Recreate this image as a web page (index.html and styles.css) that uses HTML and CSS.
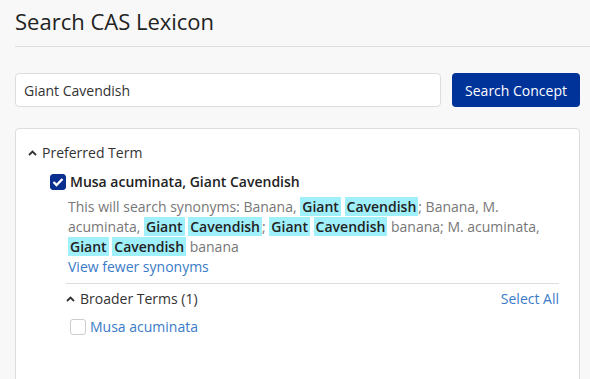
FILE: index.html
```html
<!DOCTYPE html>
<html lang="en">
<head>
    <meta charset="UTF-8">
    <meta name="viewport" content="width=device-width, initial-scale=1.0">
    <title>Search CAS Lexicon</title>
    <link rel="stylesheet" href="styles.css">
</head>
<body>
    <div class="header">
        <h1>Search CAS Lexicon</h1>
    </div>

    <div class="search-row">
        <input type="text" class="search-input" value="Giant Cavendish">
        <button class="button button-primary">Search Concept</button>
    </div>

    <div class="card">
        <div class="section-title">
            <svg class="chevron" width="9" height="6" viewBox="0 0 9 6"><path d="M1 5 L4.5 1.5 L8 5" fill="none" stroke="#333" stroke-width="1.8"/></svg>
            <span>Preferred Term</span>
        </div>

        <div class="term">
            <span class="checkbox checked">
                <svg width="12" height="10" viewBox="0 0 12 10"><path d="M1.5 5 L4.5 8 L10.5 2" fill="none" stroke="#fff" stroke-width="2.4"/></svg>
            </span>
            <span class="term-name">Musa acuminata, Giant Cavendish</span>
        </div>

        <div class="synonyms">
            <p>This will search synonyms: Banana, <mark>Giant</mark> <mark>Cavendish</mark>; Banana, M. acuminata, <mark>Giant</mark> <mark>Cavendish</mark>; <mark>Giant</mark> <mark>Cavendish</mark> banana; M. acuminata, <mark>Giant</mark> <mark>Cavendish</mark> banana</p>
            <a href="#" class="link">View fewer synonyms</a>
        </div>

        <div class="broader">
            <div class="broader-head">
                <div class="section-title">
                    <svg class="chevron" width="9" height="6" viewBox="0 0 9 6"><path d="M1 5 L4.5 1.5 L8 5" fill="none" stroke="#333" stroke-width="1.8"/></svg>
                    <span>Broader Terms (1)</span>
                </div>
                <a href="#" class="link">Select All</a>
            </div>
            <div class="term broader-term">
                <span class="checkbox"></span>
                <a href="#" class="link">Musa acuminata</a>
            </div>
        </div>
    </div>
</body>
</html>
```

FILE: styles.css
```css
body {
    font-family: "Open Sans", Arial, sans-serif;
    font-size: 14px;
    color: #333;
    background-color: #f8f8f8;
    margin: 0;
    padding: 0 10px 0 15px;
}

.header {
    margin-right: -10px;
    border-bottom: 1px solid #ddd;
    height: 46px;
}

.header h1 {
    margin: 0;
    padding-top: 6px;
    font-size: 22px;
    font-weight: 500;
    line-height: 30px;
    color: #222;
}

.search-row {
    display: flex;
    gap: 11px;
    margin-top: 26px;
}

.search-input {
    flex: 1;
    height: 34px;
    box-sizing: border-box;
    padding: 0 8px;
    border: 1px solid #ddd;
    border-radius: 4px;
    font-family: inherit;
    font-size: 14px;
    color: #333;
    background: #fff;
}

.button {
    height: 34px;
    padding: 0 13px;
    border: none;
    border-radius: 4px;
    font-family: inherit;
    font-size: 14px;
}

.button-primary {
    background-color: #00339a;
    color: #fff;
}

.card {
    margin-top: 21px;
    background: #fff;
    border: 1px solid #ddd;
    border-radius: 4px;
    padding: 14px 20px 60px 12px;
}

.section-title {
    display: flex;
    align-items: center;
    gap: 5px;
    line-height: 20px;
    font-weight: 500;
    color: #333;
}

.chevron {
    margin-top: -1px;
}

.term {
    display: flex;
    align-items: center;
    gap: 4px;
    margin: 9px 0 0 22px;
    line-height: 20px;
}

.checkbox {
    width: 16px;
    height: 16px;
    box-sizing: border-box;
    border: 1px solid #ccc;
    border-radius: 3px;
    display: flex;
    align-items: center;
    justify-content: center;
    background: #fff;
}

.checkbox.checked {
    background: #0a2f8f;
    border-color: #0a2f8f;
}

.term-name {
    font-weight: 600;
    color: #222;
}

.synonyms {
    margin: 5px 0 0 40px;
    color: #777;
    line-height: 20px;
}

.synonyms p {
    margin: 0;
}

mark {
    background: #9ff0fb;
    color: #222;
    font-weight: 600;
    padding: 0 2px;
}

.link {
    color: #3a7bc8;
    text-decoration: none;
}

.broader {
    margin: 6px 0 0 38px;
    border-top: 1px solid #ddd;
    padding-top: 5px;
}

.broader-head {
    display: flex;
    justify-content: space-between;
    align-items: center;
    line-height: 20px;
}

.broader-term {
    margin: 8px 0 0 4px;
}
```
